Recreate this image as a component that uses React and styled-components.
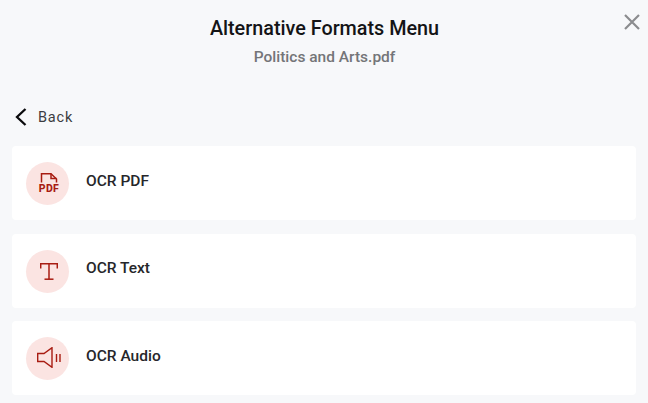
import React from 'react'
import styled, { createGlobalStyle } from 'styled-components'

const GlobalStyle = createGlobalStyle`
    html, body {
        margin: 0;
        padding: 0;
        height: 100%;
        background-color: #f7f8fa;
        font-family: Roboto, "Liberation Sans", sans-serif;
    }
`
const Page = styled.div`
    position: relative;
    width: 648px;
    height: 403px;
    overflow: hidden;
    box-sizing: border-box;
    padding: 0 12px;
    background-color: #f7f8fa;
`
const Header = styled.header`
    display: flex;
    flex-direction: column;
    align-items: center;
    padding: 16px 0 0 1px;
`
const Title = styled.h1`
    margin: 0;
    font-size: 19.8px;
    line-height: 26px;
    font-weight: 500;
    color: #141416;
`
const Subtitle = styled.p`
    margin: 6px 0 0;
    font-size: 15.5px;
    line-height: 18px;
    font-weight: 500;
    color: #747578;
`
const CloseButton = styled.button`
    position: absolute;
    top: 14px;
    right: 8px;
    width: 16px;
    height: 16px;
    padding: 0;
    border: 0;
    background: transparent;
    cursor: pointer;
    display: flex;
    svg { display: block; }
`
const BackLink = styled.a`
    display: flex;
    align-items: center;
    gap: 11px;
    margin-top: 39px;
    padding-left: 3px;
    height: 24px;
    font-size: 14.5px;
    letter-spacing: 0.8px;
    color: #3c3c40;
    cursor: pointer;
`
const List = styled.div`
    display: flex;
    flex-direction: column;
    gap: 13.5px;
    margin-top: 17px;
`
const Card = styled.div`
    display: flex;
    align-items: center;
    gap: 17px;
    height: 74px;
    padding-left: 14px;
    background-color: #ffffff;
    border-radius: 4px;
`
const IconCircle = styled.div`
    width: 43px;
    height: 43px;
    margin-top: 1px;
    border-radius: 50%;
    background-color: #fbe4e2;
    display: flex;
    align-items: center;
    justify-content: center;
    svg { display: block; }
`
const CardLabel = styled.span`
    font-size: 15.5px;
    line-height: 18px;
    font-weight: 500;
    color: #26262a;
    position: relative;
    top: -2.3px;
`
const PdfGlyph = styled.span`
    font-size: 10.5px;
    line-height: 8px;
    font-weight: 800;
    letter-spacing: 0.4px;
    color: #a81c12;
`
const PdfMark = styled.div`
    display: flex;
    flex-direction: column;
    align-items: center;
    gap: 2px;
    margin: -2px 0 0 3px;
`
const TextMark = styled.svg`
    margin-left: 3px;
`
const AudioMark = styled.svg`
    margin: -2px 0 0 3px;
`

const PdfIcon = () => (
    <PdfMark>
        <svg width="18" height="10" viewBox="0 0 18 10" fill="none" stroke="#a81c12" strokeWidth="1.5">
            <path d="M1.5 9.5V.8H11L16.5 6V9.5" />
            <path d="M11 .8V5.5H16.5" />
        </svg>
        <PdfGlyph>PDF</PdfGlyph>
    </PdfMark>
)

const TextIcon = () => (
    <TextMark width="18" height="17" viewBox="0 0 18 17" fill="none" stroke="#a81c12" strokeWidth="1.5">
        <path d="M.7 5.5V.8H17.3V5.5" />
        <path d="M9 .8V16.2" />
        <path d="M4.5 16.2H13.5" />
    </TextMark>
)

const AudioIcon = () => (
    <AudioMark width="24" height="21" viewBox="0 0 24 21" fill="none" stroke="#a81c12" strokeWidth="1.4">
        <path d="M.7 6.5H7L15 .7V20.3L7 14.5H.7Z" />
        <path d="M19.5 7V15" />
        <path d="M23 7V15" />
    </AudioMark>
)

const items = [
    { label: 'OCR PDF', icon: <PdfIcon /> },
    { label: 'OCR Text', icon: <TextIcon /> },
    { label: 'OCR Audio', icon: <AudioIcon /> },
]

export default function App() {
    return (
        <Page>
            <GlobalStyle />
            <Header>
                <Title>Alternative Formats Menu</Title>
                <Subtitle>Politics and Arts.pdf</Subtitle>
            </Header>
            <CloseButton aria-label="Close">
                <svg width="16" height="16" viewBox="0 0 16 16" stroke="#8b8c8f" strokeWidth="2.2" fill="none">
                    <path d="M1 1L15 15M15 1L1 15" />
                </svg>
            </CloseButton>
            <BackLink>
                <svg width="12" height="18" viewBox="0 0 12 18" fill="none" stroke="#0b0b0d" strokeWidth="2.3">
                    <path d="M10.5 1L2 9L10.5 17" />
                </svg>
                Back
            </BackLink>
            <List>
                {items.map(item => (
                    <Card key={item.label}>
                        <IconCircle>{item.icon}</IconCircle>
                        <CardLabel>{item.label}</CardLabel>
                    </Card>
                ))}
            </List>
        </Page>
    )
}
